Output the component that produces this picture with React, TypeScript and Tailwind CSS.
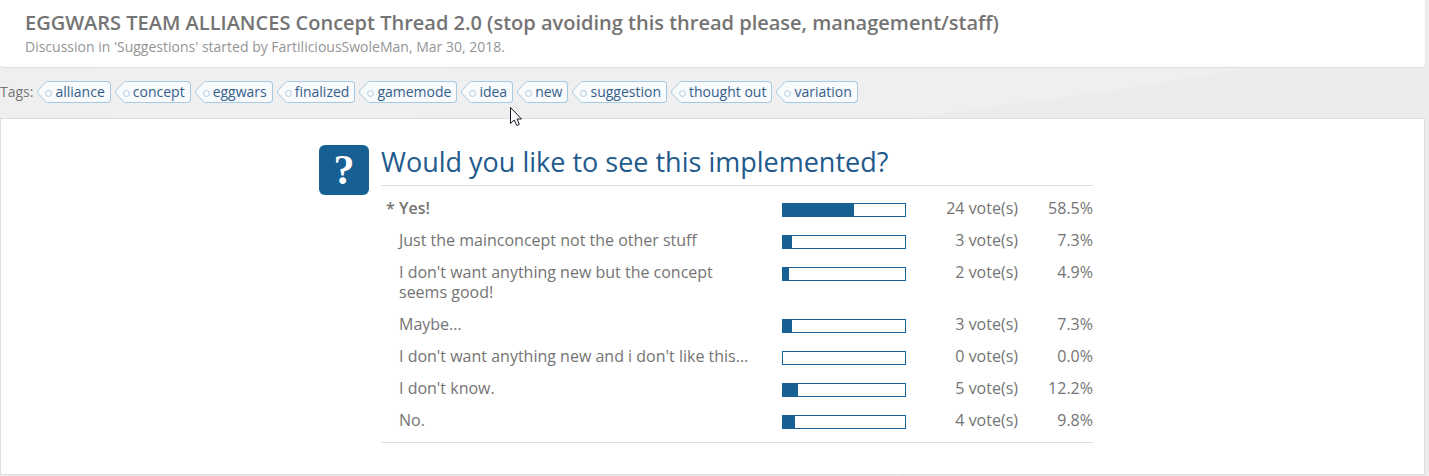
const tags = [
  'alliance',
  'concept',
  'eggwars',
  'finalized',
  'gamemode',
  'idea',
  'new',
  'suggestion',
  'thought out',
  'variation',
];

type Option = { label: string; votes: number; percent: number; mine?: boolean };

const options: Option[] = [
  { label: 'Yes!', votes: 24, percent: 58.5, mine: true },
  { label: 'Just the mainconcept not the other stuff', votes: 3, percent: 7.3 },
  { label: "I don't want anything new but the concept seems good!", votes: 2, percent: 4.9 },
  { label: 'Maybe...', votes: 3, percent: 7.3 },
  { label: "I don't want anything new and i don't like this...", votes: 0, percent: 0 },
  { label: "I don't know.", votes: 5, percent: 12.2 },
  { label: 'No.', votes: 4, percent: 9.8 },
];

function Tag({ name }: { name: string }) {
  return (
    <a href="#" className="flex h-[22px] text-[#34608d]">
      <svg width="12" height="22" viewBox="0 0 12 22" className="shrink-0" aria-hidden="true">
        <path d="M12 0.5H10.5Q9.5 0.5 8.5 1.5L1 9.5Q0 11 1 12.5L8.5 20.5Q9.5 21.5 10.5 21.5H12" fill="#f8fafb" stroke="#a5cae4" />
      </svg>
      <span className="flex items-center rounded-r-[4px] border border-l-0 border-[#a5cae4] bg-[#f8fafb] pr-[5px]">
        <svg width="7" height="7" viewBox="0 0 7 7" className="-ml-1 mr-[3px] mt-[2px]" aria-hidden="true">
          <circle cx="3.5" cy="3.5" r="2.9" fill="#fff" stroke="#a5cae4" />
        </svg>
        {name}
      </span>
    </a>
  );
}

function PollRow({ label, votes, percent, mine }: Option) {
  return (
    <tr className="align-top">
      <td className="py-[6px] pl-[5px] font-semibold">{mine ? '*' : ''}</td>
      <th scope="row" className={mine ? 'py-[6px] pr-5 text-left font-semibold' : 'py-[6px] pr-5 text-left font-normal'}>
        {label}
      </th>
      <td className="pt-[11px]">
        <div className="h-[14px] border border-[#176093]">
          <div className="h-full bg-[#176093]" style={{ width: `${percent}%` }} />
        </div>
      </td>
      <td className="py-[6px] text-right">{votes} vote(s)</td>
      <td className="py-[6px] text-right">{percent.toFixed(1)}%</td>
    </tr>
  );
}

export default function App() {
  return (
    <div className="relative min-h-screen bg-[#efefef] pr-1 font-['Open_Sans',sans-serif] text-[#747474]">
      <svg className="absolute inset-0 h-full w-full" viewBox="0 0 1429 476" preserveAspectRatio="none" aria-hidden="true">
        <path d="M900 119L1000 106L1130 88L1250 68L1429 0V476H900Z" fill="#ececec" />
        <path d="M100 68L118 119H410L450 68Z" fill="#f0f0f0" />
      </svg>
      <div className="relative">
        <header className="rounded-b-[4px] border-b border-[#dedede] bg-white px-[25px] pt-[9px] pb-[10px]">
          <h1 className="text-[20px] leading-[28px] font-semibold">
            EGGWARS TEAM ALLIANCES Concept Thread 2.0 (stop avoiding this thread please, management/staff)
          </h1>
          <p className="text-[14px] leading-[20px] text-[#959595]">
            Discussion in 'Suggestions' started by FartiliciousSwoleMan, Mar 30, 2018.
          </p>
        </header>

        <nav aria-label="Tags" className="flex flex-wrap items-center gap-1 pt-[13px] pb-[15px] text-[14px] leading-[20px]">
          <span>Tags:</span>
          {tags.map((tag) => (
            <Tag key={tag} name={tag} />
          ))}
        </nav>

        <main className="border border-[#dedede] bg-white pt-[26px] pb-[31px]">
          <section className="mx-auto flex max-w-[787px] gap-3 pr-[13px]">
            <div className="flex size-[50px] shrink-0 items-center justify-center rounded-[6px] bg-[#176093] font-['Liberation_Serif',serif] text-[42px] leading-none font-bold text-white">
              ?
            </div>
            <div className="grow">
              <h2 className="border-b border-[#dedede] pb-[6px] text-[27px] leading-[34px] text-[#235a8c]">
                Would you like to see this implemented?
              </h2>
              <table className="my-[6px] w-full table-fixed text-[16px] leading-[20px]">
                <colgroup>
                  <col className="w-[18px]" />
                  <col />
                  <col className="w-[124px]" />
                  <col className="w-[112px]" />
                  <col className="w-[75px]" />
                </colgroup>
                <tbody>
                  {options.map((option) => (
                    <PollRow key={option.label} {...option} />
                  ))}
                </tbody>
              </table>
              <div className="border-t border-[#dedede]" />
            </div>
          </section>
        </main>
      </div>

      <svg className="absolute top-[106px] left-[509px]" width="14" height="21" viewBox="0 0 14 21" aria-hidden="true">
        <path d="M1.5 1.5V17.5L5.2 14L7.8 19.5L10.3 18.4L8 13H12.5Z" fill="#fff" stroke="#17172a" />
      </svg>
    </div>
  );
}
